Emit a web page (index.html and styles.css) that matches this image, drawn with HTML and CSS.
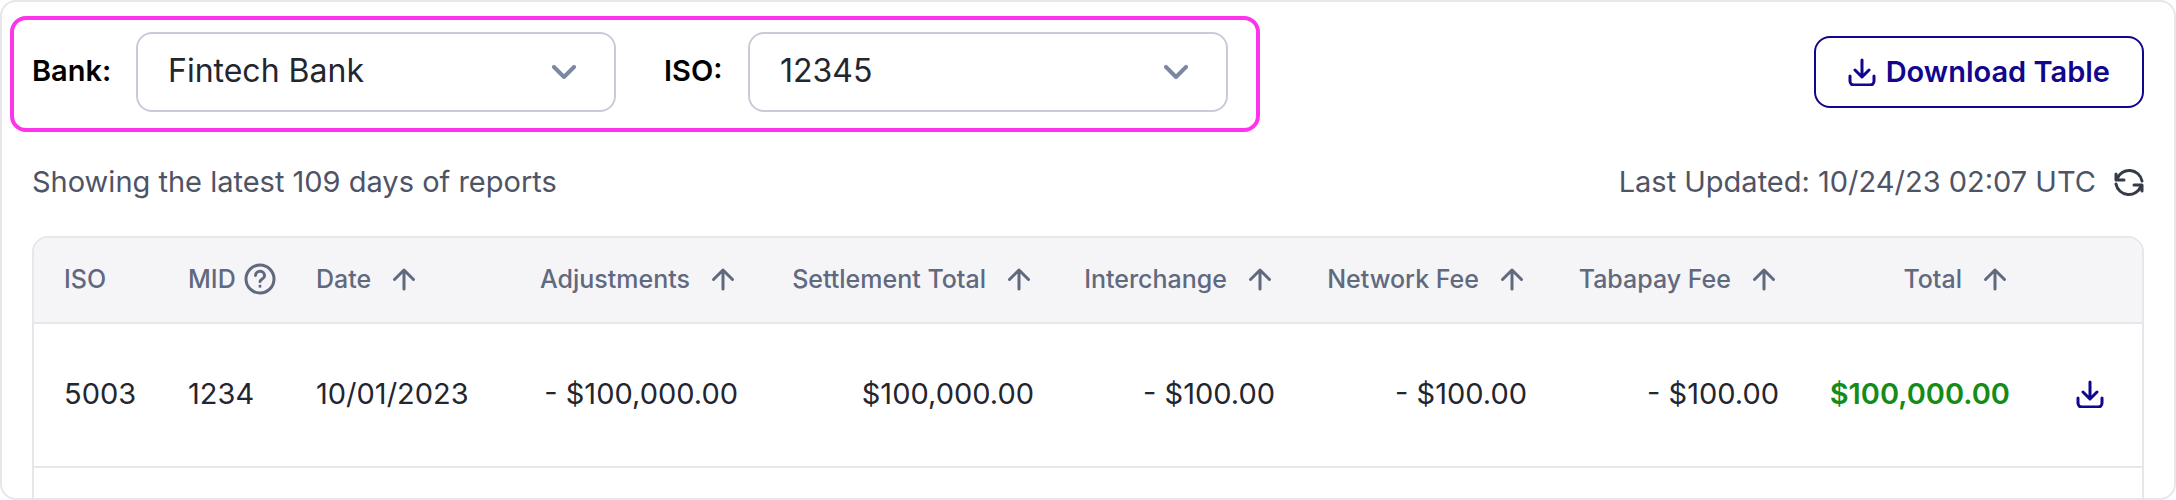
FILE: index.html
```
<!DOCTYPE html>
<html lang="en">
<head>
    <meta charset="UTF-8">
    <meta name="viewport" content="width=device-width, initial-scale=1.0">
    <title>Settlement Reports</title>
    <link rel="stylesheet" href="styles.css">
</head>
<body>
    <!-- shared icons -->
    <svg class="sprite" aria-hidden="true">
        <symbol id="icon-up" viewBox="0 0 28 28">
            <path d="M13 24V5M3.5 14.5L13 5l9.5 9.5"/>
        </symbol>
        <symbol id="icon-down" viewBox="0 0 24 14">
            <path d="M2 2l10 10L22 2"/>
        </symbol>
        <symbol id="icon-download" viewBox="0 0 28 28">
            <path d="M14 2v17M7 12l7 7 7-7M2 18v5a4 4 0 0 0 4 4h16a4 4 0 0 0 4-4v-5"/>
        </symbol>
        <symbol id="icon-refresh" viewBox="0 0 30 30">
            <path d="M2 7v6h8M3 12a13 13 0 0 1 25 2M28 24v-6h-8M27 19a13 13 0 0 1-25-2"/>
        </symbol>
        <symbol id="icon-help" viewBox="0 0 32 32">
            <circle cx="16" cy="16" r="14"/>
            <path d="M11.5 12.5a4.5 4.5 0 0 1 9 .5c0 3-4.500 3.500-4.500 5.500M16 23v.2"/>
        </symbol>
    </svg>

    <main class="card">
        <div class="toolbar">
            <form class="filters">
                <label for="bank">Bank:</label>
                <div class="select">
                    <select id="bank" name="bank">
                        <option>Fintech Bank</option>
                    </select>
                    <svg class="chevron" aria-hidden="true"><use href="#icon-down"/></svg>
                </div>
                <label for="iso">ISO:</label>
                <div class="select">
                    <select id="iso" name="iso">
                        <option>12345</option>
                    </select>
                    <svg class="chevron" aria-hidden="true"><use href="#icon-down"/></svg>
                </div>
            </form>
            <button type="button" class="download">
                <svg class="icon" aria-hidden="true"><use href="#icon-download"/></svg>
                Download Table
            </button>
        </div>

        <div class="summary">
            <p>Showing the latest 109 days of reports</p>
            <p class="updated">
                Last Updated: 10/24/23 02:07 UTC
                <button type="button" class="icon-button" aria-label="Refresh">
                    <svg class="icon-refresh" aria-hidden="true"><use href="#icon-refresh"/></svg>
                </button>
            </p>
        </div>

        <div class="table-wrap">
            <table>
                <colgroup>
                    <col class="col-iso">
                    <col class="col-mid">
                    <col class="col-date">
                    <col class="col-adjustments">
                    <col class="col-settlement">
                    <col class="col-interchange">
                    <col class="col-fee">
                    <col class="col-fee">
                    <col class="col-total">
                    <col class="col-action">
                </colgroup>
                <thead>
                    <tr>
                        <th>ISO</th>
                        <th><button type="button" class="help">MID <svg class="icon-help" aria-hidden="true"><use href="#icon-help"/></svg></button></th>
                        <th><button type="button" class="sort">Date <svg class="icon" aria-hidden="true"><use href="#icon-up"/></svg></button></th>
                        <th class="num"><button type="button" class="sort">Adjustments <svg class="icon" aria-hidden="true"><use href="#icon-up"/></svg></button></th>
                        <th class="num"><button type="button" class="sort">Settlement Total <svg class="icon" aria-hidden="true"><use href="#icon-up"/></svg></button></th>
                        <th class="num"><button type="button" class="sort">Interchange <svg class="icon" aria-hidden="true"><use href="#icon-up"/></svg></button></th>
                        <th class="num"><button type="button" class="sort">Network Fee <svg class="icon" aria-hidden="true"><use href="#icon-up"/></svg></button></th>
                        <th class="num"><button type="button" class="sort">Tabapay Fee <svg class="icon" aria-hidden="true"><use href="#icon-up"/></svg></button></th>
                        <th class="num"><button type="button" class="sort">Total <svg class="icon" aria-hidden="true"><use href="#icon-up"/></svg></button></th>
                        <th></th>
                    </tr>
                </thead>
                <tbody>
                    <tr>
                        <td>5003</td>
                        <td>1234</td>
                        <td>10/01/2023</td>
                        <td class="num">- $100,000.00</td>
                        <td class="num">$100,000.00</td>
                        <td class="num">- $100.00</td>
                        <td class="num">- $100.00</td>
                        <td class="num">- $100.00</td>
                        <td class="num total">$100,000.00</td>
                        <td class="action">
                            <button type="button" class="icon-button" aria-label="Download report">
                                <svg class="icon" aria-hidden="true"><use href="#icon-download"/></svg>
                            </button>
                        </td>
                    </tr>
                    <tr>
                        <td colspan="10"></td>
                    </tr>
                </tbody>
            </table>
        </div>
    </main>
</body>
</html>
```
FILE: styles.css
```
* {
    box-sizing: border-box;
}
body {
    margin: 0;
    font-family: Inter, "Liberation Sans", sans-serif;
    font-size: 29px;
    line-height: 36px;
    color: #23262f;
    background: white;
}
button, select {
    font: inherit;
    color: inherit;
    background: none;
    border: none;
    padding: 0;
    cursor: pointer;
}
p {
    margin: 0;
}
svg {
    fill: none;
    stroke: currentColor;
    stroke-width: 3;
    stroke-linecap: round;
    stroke-linejoin: round;
    flex: none;
}
.sprite {
    display: none;
}
.icon {
    width: 28px;
    height: 28px;
}
.card {
    height: 100vh;
    padding: 14px 30px 0 8px;
    border: 2px solid #e6e6eb;
    border-radius: 16px;
    overflow: hidden;
}

/* filters and download */
.toolbar {
    display: flex;
    justify-content: space-between;
    align-items: flex-start;
}
.filters {
    display: flex;
    align-items: center;
    padding: 12px 28px 16px 18px;
    border: 4px solid #ff33eb;
    border-radius: 16px;
}
.filters label {
    width: 104px;
    padding-bottom: 2px;
    font-weight: 600;
    color: black;
}
.select {
    position: relative;
    width: 480px;
}
.select + label {
    width: 84px;
    margin-left: 48px;
}
.select select {
    display: block;
    width: 100%;
    height: 80px;
    padding: 0 80px 2px 30px;
    font-size: 32px;
    appearance: none;
    border: 2px solid #c9ccd8;
    border-radius: 16px;
}
.chevron {
    position: absolute;
    right: 40px;
    top: 33px;
    width: 24px;
    height: 14px;
    stroke-width: 4;
    color: #7c87a3;
    pointer-events: none;
}
.download {
    display: flex;
    align-items: center;
    gap: 10px;
    height: 72px;
    margin-top: 20px;
    padding: 0 32px;
    font-weight: 600;
    color: #11068d;
    border: 2px solid #11068d;
    border-radius: 16px;
}

.summary {
    display: flex;
    justify-content: space-between;
    padding: 32px 0 36px 22px;
    color: #4e5466;
}
.updated {
    display: flex;
    align-items: center;
    gap: 18px;
}
.icon-button {
    display: flex;
}
.icon-refresh {
    width: 30px;
    height: 30px;
    color: #363b48;
}

/* reports table */
.table-wrap {
    margin-left: 22px;
    border: 2px solid #e6e6eb;
    border-radius: 16px;
    overflow: hidden;
}
table {
    width: 100%;
    table-layout: fixed;
    border-collapse: separate;
    border-spacing: 0;
}
.col-iso { width: 130px; }
.col-mid { width: 128px; }
.col-date { width: 223px; }
.col-adjustments { width: 247px; }
.col-settlement { width: 296px; }
.col-interchange { width: 241px; }
.col-fee { width: 252px; }
.col-total { width: 231px; }
.col-action { width: 108px; }
th, td {
    padding: 0 24px 2px;
    text-align: left;
    white-space: nowrap;
    border-bottom: 2px solid #e6e6eb;
}
th:first-child, td:first-child {
    padding-left: 30px;
}
th {
    height: 86px;
    font-size: 25px;
    font-weight: 500;
    color: #60697e;
    background: #f5f5f8;
}
td {
    height: 144px;
}
.num {
    text-align: right;
}
.sort, .help {
    display: inline-flex;
    align-items: center;
    gap: 20px;
}
.help {
    gap: 8px;
}
.icon-help {
    width: 32px;
    height: 32px;
}
.total {
    font-weight: 600;
    color: #158c17;
}
.action {
    padding-left: 42px;
    color: #11068d;
}
```
